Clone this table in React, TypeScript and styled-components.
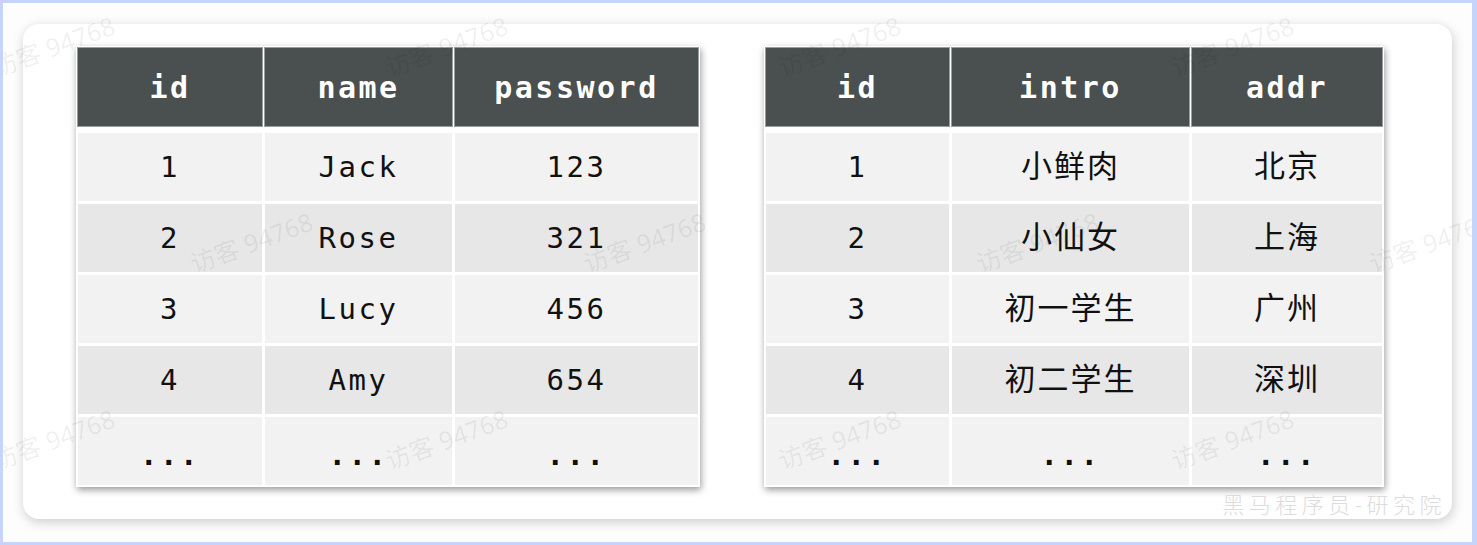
import styled, { createGlobalStyle } from 'styled-components';

const GlobalStyle = createGlobalStyle`
  html, body {
    margin: 0;
    padding: 0;
    background: #ffffff;
  }
`;

const Frame = styled.div`
  position: relative;
  box-sizing: border-box;
  width: 1477px;
  height: 545px;
  border: 3px solid #c6d4fc;
  border-right-width: 5px;
  background: #fdfdfd;
  padding: 21px 0 0 20px;
  overflow: hidden;
`;

const Card = styled.div`
  position: relative;
  box-sizing: border-box;
  width: 1429px;
  height: 495px;
  border-radius: 16px;
  background: #ffffff;
  box-shadow: 1px 3px 12px rgba(0, 0, 0, 0.2);
  display: flex;
  align-items: flex-start;
  gap: 64px;
  padding: 22px 0 0 53px;
`;

const Table = styled.div<{ $cols: string }>`
  box-sizing: border-box;
  display: grid;
  grid-template-columns: ${(p) => p.$cols};
  grid-template-rows: 82px repeat(5, 68px);
  column-gap: 3px;
  row-gap: 3px;
  padding: 2px;
  background: #ffffff;
  box-shadow: 1px 3px 7px rgba(0, 0, 0, 0.4);
`;

const HeadCell = styled.div`
  display: flex;
  align-items: center;
  justify-content: center;
  background: #4a4f4f;
  color: #ffffff;
  font-family: 'DejaVu Sans Mono', monospace;
  font-weight: bold;
  font-size: 30px;
  letter-spacing: 2.5px;
  margin-bottom: 4px;
  box-shadow: 0 0 0 1px #9a9d9d;
`;

const Cell = styled.div<{ $alt?: boolean; $cjk?: boolean; $dots?: boolean }>`
  display: flex;
  align-items: center;
  justify-content: center;
  background: ${(p) => (p.$alt ? '#e7e7e7' : '#f2f2f2')};
  color: #111111;
  font-family: ${(p) =>
    p.$cjk ? "'Noto Sans CJK SC', sans-serif" : "'DejaVu Sans Mono', monospace"};
  font-size: ${(p) => (p.$cjk ? '31px' : '29px')};
  font-weight: ${(p) => (p.$dots ? 'bold' : 'normal')};
  letter-spacing: ${(p) => (p.$cjk ? '2px' : '2.5px')};
  padding-top: ${(p) => (p.$dots ? '8px' : '0')};
  padding-bottom: ${(p) => (p.$cjk ? '7px' : '0')};
`;

const Watermarks = styled.div`
  position: absolute;
  inset: 0;
  pointer-events: none;
`;

const Mark = styled.span<{ $x: number; $y: number }>`
  position: absolute;
  left: ${(p) => p.$x}px;
  top: ${(p) => p.$y}px;
  transform: translate(-50%, -50%) rotate(-20deg);
  white-space: nowrap;
  font-family: 'Noto Sans', 'Noto Sans CJK SC', sans-serif;
  font-size: 25px;
  color: rgba(0, 0, 0, 0.065);
`;

const Brand = styled.div`
  position: absolute;
  right: 6px;
  bottom: 0px;
  font-family: 'Noto Sans CJK SC', sans-serif;
  font-weight: 300;
  font-size: 22px;
  letter-spacing: 4.5px;
  color: #dcdcdc;
  white-space: nowrap;
`;

const users = [
  ['1', 'Jack', '123'],
  ['2', 'Rose', '321'],
  ['3', 'Lucy', '456'],
  ['4', 'Amy', '654'],
  ['...', '...', '...'],
];

const infos = [
  ['1', '小鲜肉', '北京'],
  ['2', '小仙女', '上海'],
  ['3', '初一学生', '广州'],
  ['4', '初二学生', '深圳'],
  ['...', '...', '...'],
];

const markXs = [50, 443, 836, 1229];
const markRows = [
  { y: 42, shift: 0 },
  { y: 238, shift: 198 },
  { y: 435, shift: 0 },
];

const isCjk = (s: string) => /[\u4e00-\u9fff]/.test(s);

const DataTable = ({ cols, head, rows }: { cols: string; head: string[]; rows: string[][] }) => (
  <Table $cols={cols}>
    {head.map((h) => (
      <HeadCell key={h}>{h}</HeadCell>
    ))}
    {rows.map((row, i) =>
      row.map((v, j) => (
        <Cell key={`${i}-${j}`} $alt={i % 2 === 1} $cjk={isCjk(v)} $dots={v === '...'}>
          {v}
        </Cell>
      ))
    )}
  </Table>
);

const App = () => (
  <>
    <GlobalStyle />
    <Frame>
      <Card>
        <DataTable cols="184px 187px 243px" head={['id', 'name', 'password']} rows={users} />
        <DataTable cols="183px 237px 190px" head={['id', 'intro', 'addr']} rows={infos} />
        <Brand>黑马程序员-研究院</Brand>
      </Card>
      <Watermarks>
        {markRows.map((r) =>
          markXs.map((x) => (
            <Mark key={`${r.y}-${x}`} $x={x + r.shift} $y={r.y}>
              访客 94768
            </Mark>
          ))
        )}
      </Watermarks>
    </Frame>
  </>
);

export default App;
